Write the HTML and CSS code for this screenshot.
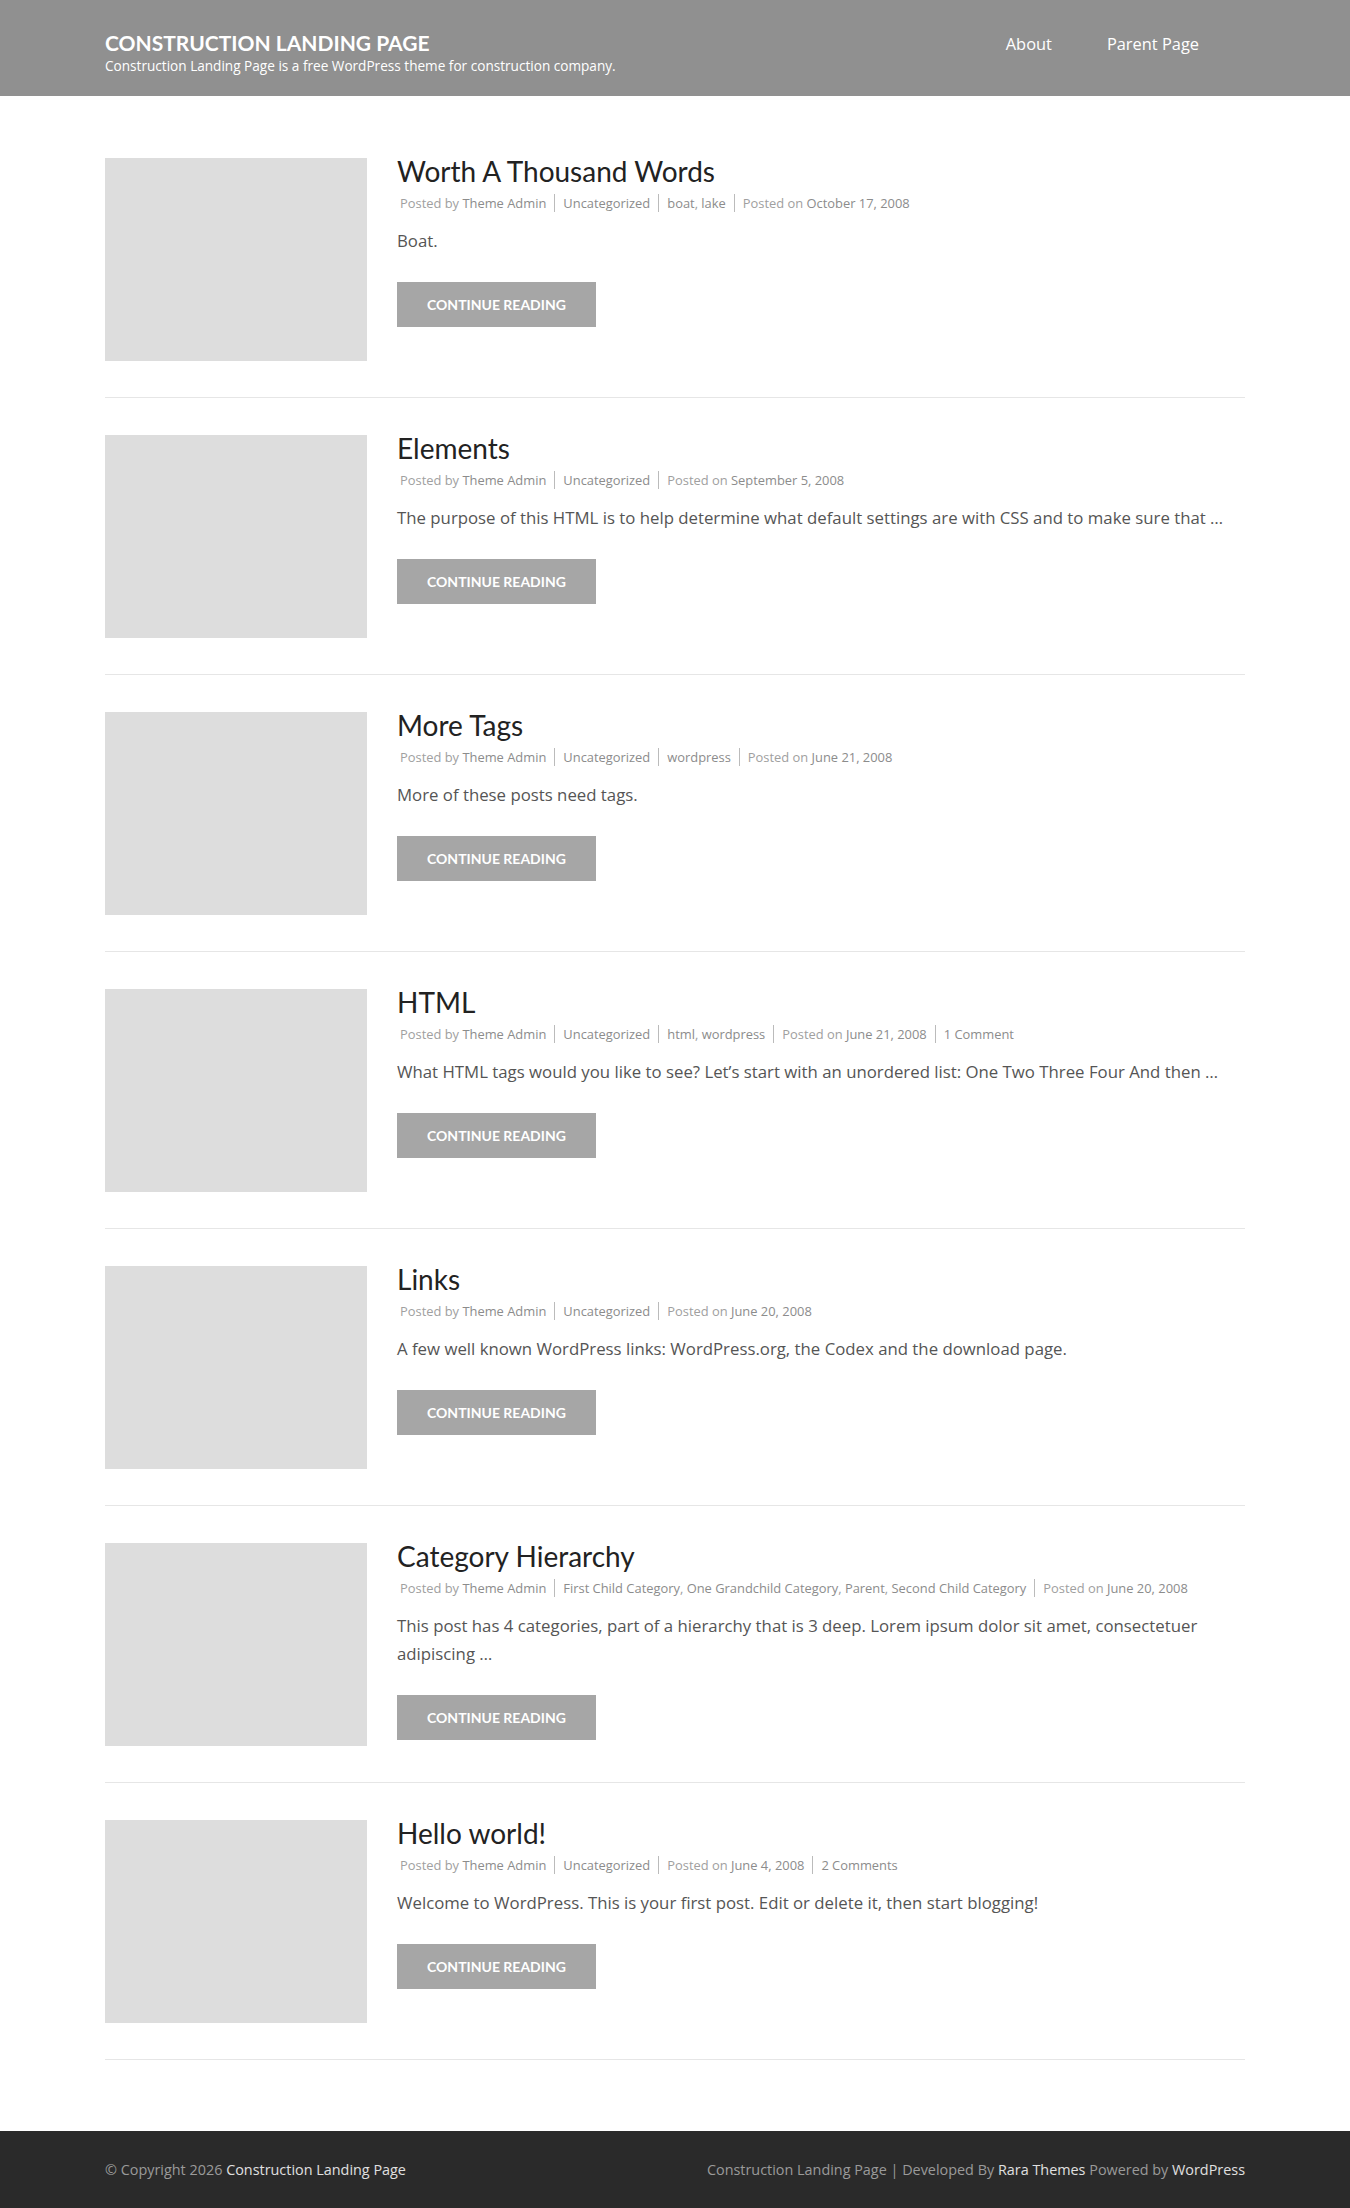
FILE: index.html
```html
<!DOCTYPE html>
<html lang="en">
<head>
<meta charset="utf-8">
<title>Construction Landing Page</title>
<link rel="stylesheet" href="styles.css">
</head>
<body>
<header class="site-header">
  <div class="container header-inner">
    <div class="branding">
      <a class="site-title" href="#">Construction Landing Page</a>
      <p class="site-desc">Construction Landing Page is a free WordPress theme for construction company.</p>
    </div>
    <nav class="main-nav">
      <a href="#">About</a>
      <a href="#">Parent Page</a>
    </nav>
  </div>
</header>

<main class="site-main">
  <div class="container">
    <article class="post">
      <div class="thumb"></div>
      <div class="post-body">
        <h2 class="post-title">Worth A Thousand Words</h2>
        <div class="meta"><span>Posted by <a href="#">Theme Admin</a></span><span><a href="#">Uncategorized</a></span><span><a href="#">boat</a>, <a href="#">lake</a></span><span>Posted on <a href="#">October 17, 2008</a></span></div>
        <p class="excerpt">Boat.</p>
        <a class="btn" href="#">Continue Reading</a>
      </div>
    </article>

    <article class="post">
      <div class="thumb"></div>
      <div class="post-body">
        <h2 class="post-title">Elements</h2>
        <div class="meta"><span>Posted by <a href="#">Theme Admin</a></span><span><a href="#">Uncategorized</a></span><span>Posted on <a href="#">September 5, 2008</a></span></div>
        <p class="excerpt">The purpose of this HTML is to help determine what default settings are with CSS and to make sure that …</p>
        <a class="btn" href="#">Continue Reading</a>
      </div>
    </article>

    <article class="post">
      <div class="thumb"></div>
      <div class="post-body">
        <h2 class="post-title">More Tags</h2>
        <div class="meta"><span>Posted by <a href="#">Theme Admin</a></span><span><a href="#">Uncategorized</a></span><span><a href="#">wordpress</a></span><span>Posted on <a href="#">June 21, 2008</a></span></div>
        <p class="excerpt">More of these posts need tags.</p>
        <a class="btn" href="#">Continue Reading</a>
      </div>
    </article>

    <article class="post">
      <div class="thumb"></div>
      <div class="post-body">
        <h2 class="post-title">HTML</h2>
        <div class="meta"><span>Posted by <a href="#">Theme Admin</a></span><span><a href="#">Uncategorized</a></span><span><a href="#">html</a>, <a href="#">wordpress</a></span><span>Posted on <a href="#">June 21, 2008</a></span><span><a href="#">1 Comment</a></span></div>
        <p class="excerpt">What HTML tags would you like to see? Let’s start with an unordered list: One Two Three Four And then …</p>
        <a class="btn" href="#">Continue Reading</a>
      </div>
    </article>

    <article class="post">
      <div class="thumb"></div>
      <div class="post-body">
        <h2 class="post-title">Links</h2>
        <div class="meta"><span>Posted by <a href="#">Theme Admin</a></span><span><a href="#">Uncategorized</a></span><span>Posted on <a href="#">June 20, 2008</a></span></div>
        <p class="excerpt">A few well known WordPress links: WordPress.org, the Codex and the download page.</p>
        <a class="btn" href="#">Continue Reading</a>
      </div>
    </article>

    <article class="post">
      <div class="thumb"></div>
      <div class="post-body">
        <h2 class="post-title">Category Hierarchy</h2>
        <div class="meta"><span>Posted by <a href="#">Theme Admin</a></span><span><a href="#">First Child Category</a>, <a href="#">One Grandchild Category</a>, <a href="#">Parent</a>, <a href="#">Second Child Category</a></span><span>Posted on <a href="#">June 20, 2008</a></span></div>
        <p class="excerpt">This post has 4 categories, part of a hierarchy that is 3 deep. Lorem ipsum dolor sit amet, consectetuer adipiscing …</p>
        <a class="btn" href="#">Continue Reading</a>
      </div>
    </article>

    <article class="post">
      <div class="thumb"></div>
      <div class="post-body">
        <h2 class="post-title">Hello world!</h2>
        <div class="meta"><span>Posted by <a href="#">Theme Admin</a></span><span><a href="#">Uncategorized</a></span><span>Posted on <a href="#">June 4, 2008</a></span><span><a href="#">2 Comments</a></span></div>
        <p class="excerpt">Welcome to WordPress. This is your first post. Edit or delete it, then start blogging!</p>
        <a class="btn" href="#">Continue Reading</a>
      </div>
    </article>
  </div>
</main>

<footer class="site-footer">
  <div class="container footer-inner">
    <div class="copy">© Copyright 2026 <a href="#">Construction Landing Page</a></div>
    <div class="credits">Construction Landing Page | Developed By <a href="#">Rara Themes</a> Powered by <a href="#">WordPress</a></div>
  </div>
</footer>
</body>
</html>
```

FILE: styles.css
```css
* { box-sizing: border-box; }

body {
  margin: 0;
  font-family: Lato, "Open Sans", "Liberation Sans", sans-serif;
  color: #555;
  background: #fff;
}

a { text-decoration: none; color: inherit; }

.container {
  width: 1170px;
  margin: 0 auto;
  padding: 0 15px;
}

/* Header */
.site-header {
  background: #909090;
  height: 96px;
}

.header-inner {
  display: flex;
  justify-content: space-between;
  align-items: flex-start;
  height: 100%;
}

.branding {
  padding-top: 30px;
}

.site-title {
  display: block;
  color: #fff;
  font-size: 21px;
  font-weight: 700;
  text-transform: uppercase;
  line-height: 26px;
}

.site-desc {
  margin: 0;
  color: #fff;
  font-family: "Open Sans", Lato, sans-serif;
  font-size: 13.6px;
  line-height: 20px;
}

.main-nav {
  display: flex;
  gap: 55px;
  padding-top: 33px;
  padding-right: 46px;
}

.main-nav a {
  color: #fff;
  font-family: "Open Sans", Lato, sans-serif;
  font-size: 16.4px;
  line-height: 22px;
}

/* Main */
.site-main {
  padding: 25px 0 71px;
}

.post {
  display: flex;
  gap: 30px;
  padding: 37px 0 36px;
  border-bottom: 1px solid #e6e6e6;
}

.thumb {
  flex: 0 0 262px;
  height: 203px;
  background: #dddddd;
}

.post-body {
  flex: 1;
  min-width: 0;
}

.post-title {
  margin: -4px 0 0;
  font-size: 28px;
  font-weight: 400;
  line-height: 34px;
  color: #222;
}

.meta {
  margin-top: 5px;
  font-family: "Open Sans", Lato, sans-serif;
  font-size: 12.9px;
  line-height: 20px;
  color: #a0a0a0;
  padding-left: 3px;
}

.meta span + span {
  border-left: 1px solid #bbb;
  margin-left: 8px;
  padding-left: 8px;
}

.meta a { color: #8c8c8c; }

.excerpt {
  margin: 14px 0 0;
  font-family: "Open Sans", Lato, sans-serif;
  font-size: 16.8px;
  line-height: 28px;
  color: #555;
}

.btn {
  display: inline-block;
  margin-top: 27px;
  height: 45px;
  line-height: 45px;
  padding: 0 30px;
  background: #a6a6a6;
  color: #fff;
  font-size: 14px;
  font-weight: 700;
  text-transform: uppercase;
}

/* Footer */
.site-footer {
  background: #2a2a2a;
  height: 77px;
}

.footer-inner {
  display: flex;
  justify-content: space-between;
  align-items: center;
  height: 100%;
  font-family: "Open Sans", Lato, sans-serif;
  font-size: 14.4px;
  color: #9a9a9a;
}

.footer-inner a { color: #e0e0e0; }
```
